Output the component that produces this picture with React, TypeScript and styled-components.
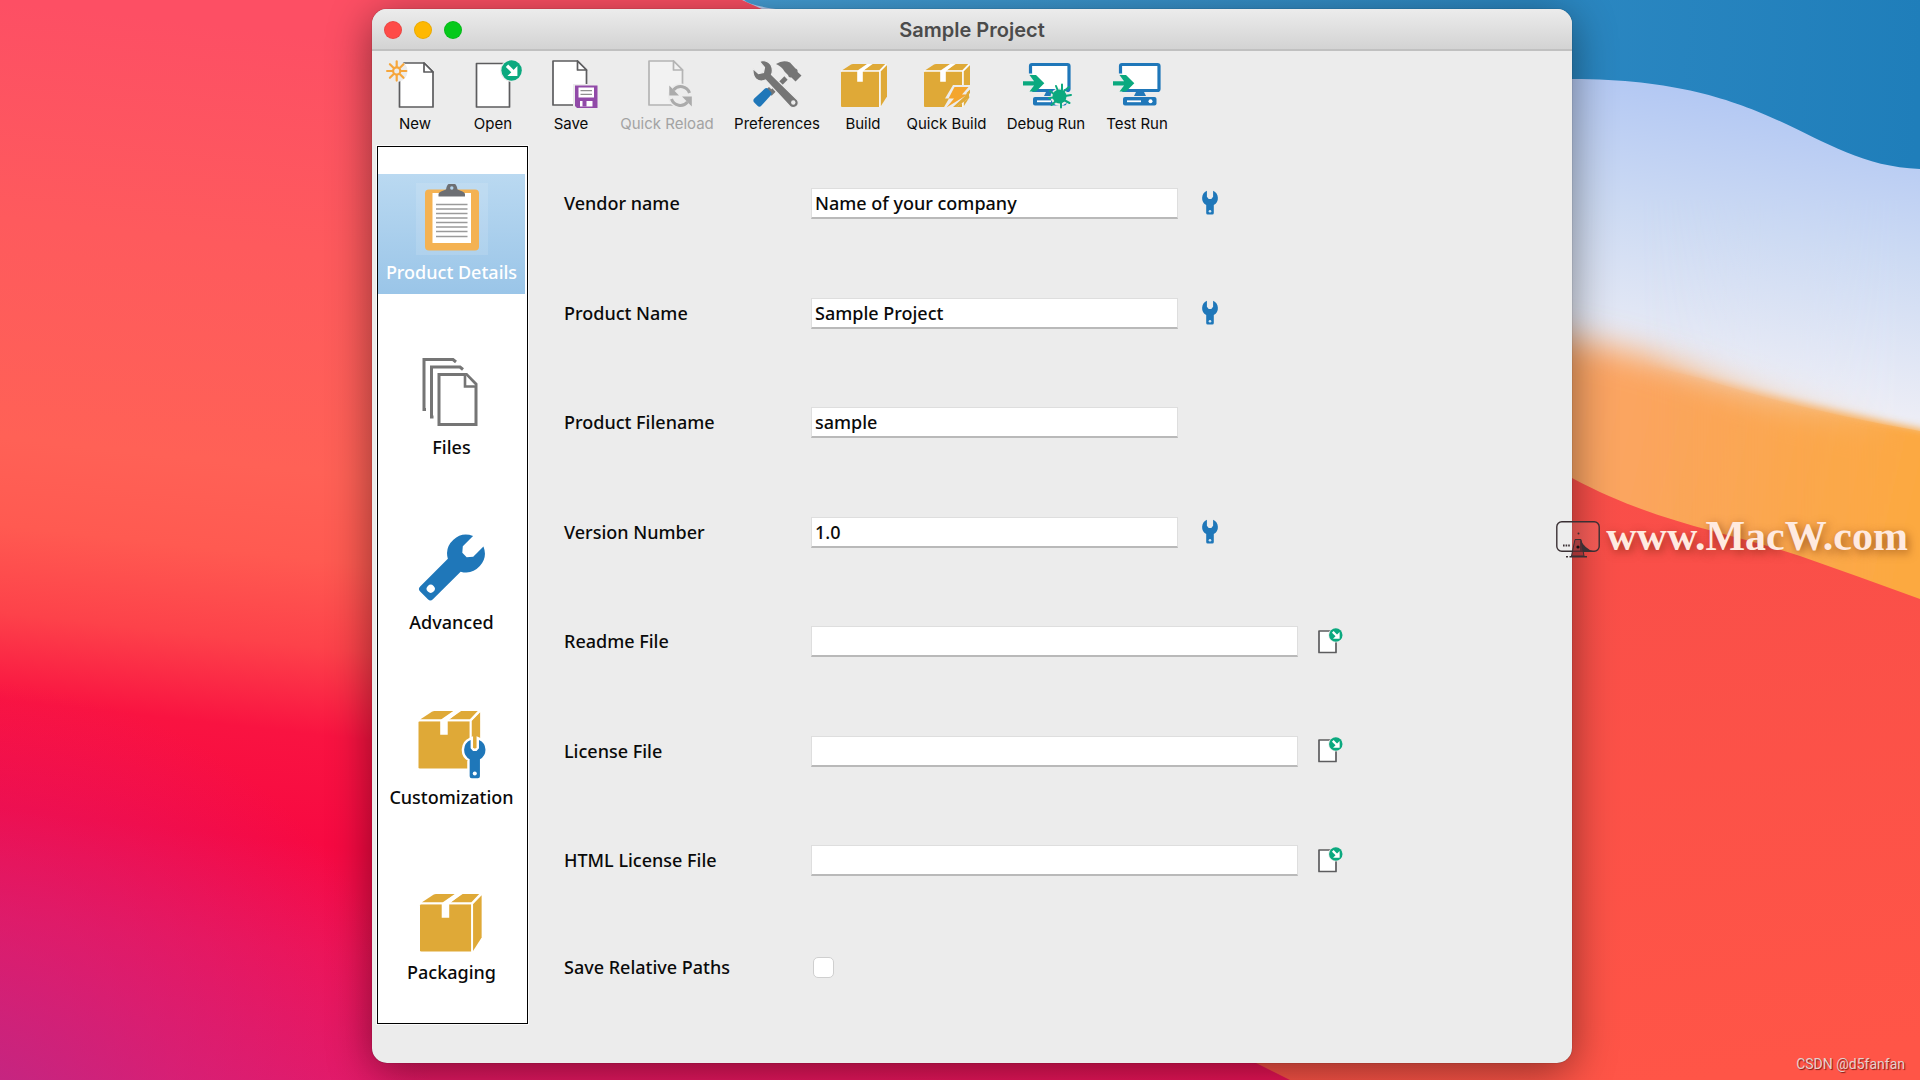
import React, { useState } from "react";
import styled, { createGlobalStyle } from "styled-components";

const BLUE = "#1f77b9";
const GREEN = "#0ba97f";
const GOLD = "#dfa937";
const GREY = "#757575";
const LINE = "#5c5c5e";
const FACE = "#ececec";

const GlobalStyle = createGlobalStyle`
  *, *::before, *::after { box-sizing: border-box; }
  body { margin: 0; }
  button, input { font: inherit; color: inherit; }
`;

/* ---------- layout ---------- */

const Desktop = styled.div`
  position: relative;
  isolation: isolate;
  overflow: hidden;
  display: flex;
  min-height: 100vh;
  padding: 9px 348px 17px 372px;
  font-family: "Noto Sans", "Open Sans", sans-serif;
  font-size: 18px;
  font-weight: 500;
  color: #0a0a0a;
`;

const Wallpaper = styled.svg`
  position: absolute;
  inset: 0;
  z-index: -1;
  width: 100%;
  height: 100%;
`;

const Window = styled.main`
  flex: 1;
  display: flex;
  flex-direction: column;
  border-radius: 15px;
  background: ${FACE};
  box-shadow: 0 0 1px rgba(0, 0, 0, 0.6), 0 8px 44px rgba(0, 0, 0, 0.45);
`;

const TitleBar = styled.header`
  display: grid;
  grid-template-columns: 1fr auto 1fr;
  align-items: center;
  height: 42px;
  padding: 2px 12px 0;
  border-bottom: 2px solid #c0c0c0;
  border-radius: 15px 15px 0 0;
  background: linear-gradient(#ececec, #d3d3d3);
`;

const Lights = styled.div`
  display: flex;
  gap: 12px;
`;

const Light = styled.button<{ $color: string }>`
  width: 18px;
  height: 18px;
  padding: 0;
  border: 1px solid rgba(0, 0, 0, 0.08);
  border-radius: 50%;
  background: ${(p) => p.$color};
`;

const Title = styled.h1`
  margin: 0;
  font-family: Inter, "Liberation Sans", sans-serif;
  font-size: 20px;
  font-weight: 600;
  line-height: 24px;
  color: #4b4b4b;
`;

const Toolbar = styled.div`
  display: flex;
  padding: 9px 4px 0;
`;

const ToolButton = styled.button<{ $width: number }>`
  display: flex;
  flex-direction: column;
  align-items: center;
  gap: 6px;
  width: ${(p) => p.$width}px;
  padding: 0;
  border: 0;
  background: none;
  font-family: Inter, "Liberation Sans", sans-serif;
  font-size: 15px;
  font-weight: 400;
  line-height: 20px;
  white-space: nowrap;
  &:disabled { color: #a3a3a3; }
`;

const ToolIcon = styled.svg`
  width: 60px;
  height: 48px;
  overflow: visible;
`;

const Body = styled.div`
  flex: 1;
  display: flex;
  padding: 12px 5px 39px;
`;

const Sidebar = styled.nav`
  display: flex;
  flex-direction: column;
  justify-content: space-between;
  width: 151px;
  padding: 27px 2px 29px 0;
  border: 1px solid #000;
  background: #fff;
  box-shadow: 0 0 0 1px #fafafa;
`;

const SideItem = styled.button<{ $active: boolean }>`
  display: flex;
  flex-direction: column;
  align-items: center;
  gap: 5px;
  height: 120px;
  padding: 9px 0;
  border: 0;
  background: ${(p) => (p.$active ? "linear-gradient(#bad9f1, #9ac5e8)" : "none")};
  color: ${(p) => (p.$active ? "#fff" : "inherit")};
  line-height: 24px;
  white-space: nowrap;
`;

const SideIcon = styled.svg`
  width: 72px;
  height: 72px;
`;

const Form = styled.form`
  flex: 1;
  display: flex;
  flex-direction: column;
  justify-content: space-between;
  padding: 42px 36px 44px;
`;

const Row = styled.div`
  display: grid;
  grid-template-columns: 247px 1fr;
  align-items: center;
  line-height: 25px;
`;

const Field = styled.div`
  display: flex;
  align-items: center;
  gap: 20px;
`;

const TextInput = styled.input<{ $long?: boolean }>`
  width: ${(p) => (p.$long ? 487 : 367)}px;
  height: 31px;
  padding: 0 3px;
  border: 1px solid #dedede;
  border-bottom: 2px solid #b9b9b9;
  background: #fff;
  outline: none;
`;

const IconButton = styled.button`
  display: flex;
  padding: 0;
  border: 0;
  background: none;
`;

const Check = styled.input`
  appearance: none;
  width: 21px;
  height: 21px;
  margin: 0 2px;
  border: 1px solid #cfcfcf;
  border-radius: 5px;
  background: #fff;
  &:checked { background: ${BLUE}; }
`;

const SiteMark = styled.div`
  position: absolute;
  right: 12px;
  top: 512px;
  display: flex;
  align-items: center;
  gap: 6px;
  font-family: "Liberation Serif", serif;
  font-size: 42px;
  font-weight: 700;
  line-height: 48px;
  color: #ffeae0;
  text-shadow: 2px 3px 10px rgba(90, 30, 0, 0.55);
`;

const Credit = styled.div`
  position: absolute;
  right: 15px;
  bottom: 6px;
  font-family: Roboto, "Liberation Sans", sans-serif;
  font-size: 14px;
  font-weight: 400;
  line-height: 20px;
  color: #e6d0cd;
  text-shadow: 1px 1px 1px rgba(70, 0, 0, 0.7);
`;

/* ---------- drawings ---------- */

const wrenchPath = (len: number) =>
  `M4.9 .7A8 8 0 0 0 4.2 15V${len - 1.5}Q4.2 ${len} 5.7 ${len}H10.3Q11.8 ${len} 11.8 ${len - 1.5}V15A8 8 0 0 0 11.1 .7V6.8L9.3 8.9H6.7L4.9 6.8Z`;

function Arrow({ x, y }: { x: number; y: number }) {
  return (
    <g transform={`translate(${x} ${y})`}>
      <circle r="11.4" fill={FACE} />
      <circle r="10.2" fill={GREEN} />
      <path d="M-4.6 -4.8L4 3.8" stroke="#fff" strokeWidth="3.4" />
      <path d="M5.8 -4.4V5.6H-4.2L-.8 2.2 2.4 -1Z" fill="#fff" />
    </g>
  );
}

function Sheet({ x, y, stroke = LINE, fill = "#fff" }: { x: number; y: number; stroke?: string; fill?: string }) {
  return (
    <g transform={`translate(${x} ${y})`} fill={fill} stroke={stroke} strokeWidth="1.7" strokeLinejoin="round">
      <path d="M0 0H24.5L33.5 9V44H0Z" />
      <path d="M24.5 0V9H33.5Z" />
    </g>
  );
}

/* Parcel drawn in a 46 x 43 box. */
function Parcel({ x, y, scale = 1 }: { x: number; y: number; scale?: number }) {
  return (
    <g transform={`translate(${x} ${y}) scale(${scale})`}>
      <path d="M1 7.6H38.2V43H1Q0 43 0 42V8.6Q0 7.6 1 7.6Z" fill={GOLD} />
      <path d="M1.2 6.3L10 .5Q10.8 0 12 0H26L16.8 6.3Z" fill={GOLD} />
      <path d="M22.6 6.3L31.8 0H44.2L38.2 6.3Z" fill={GOLD} />
      <path d="M39.6 7.4L46 1V32.5L39.6 42.5Z" fill={GOLD} />
      <path d="M16.2 7.2L26.4 0H31L21.8 7.2V17.8H16.2Z" fill="#fff" />
      <path d="M0 7H39L45.4 .4M38.9 7V43" fill="none" stroke="#fff" strokeWidth="1.2" />
    </g>
  );
}

function Monitor({ x }: { x: number }) {
  return (
    <g transform={`translate(${x} 0)`}>
      <rect x="1.5" y="4.5" width="38.5" height="26" rx="1.5" fill="#fff" stroke={BLUE} strokeWidth="3.2" />
      <path d="M17 32H25L27 36H15Z" fill={BLUE} />
      <rect x="4" y="37" width="33.5" height="8.5" rx="2" fill={BLUE} />
      <path d="M8 41.3H22" stroke="#fff" strokeWidth="1.8" />
      <circle cx="31.5" cy="41.3" r="2" fill="#fff" />
      <path d="M-1 13.500H3.300V33H-1Z" fill={FACE} />
      <path d="M-6 21.200H5L.5 15H7L15.300 23.300 7 31.600H.5L5 25.500H-6Z" fill={GREEN} />
    </g>
  );
}

const toolIcons = {
  new: (
    <>
      <Sheet x={14.5} y={3} />
      <circle cx="11.7" cy="11" r="10.8" fill={FACE} />
      <g stroke="#f6a63c" strokeWidth="2.2" strokeLinecap="round" fill="none">
        <circle cx="11.7" cy="11" r="3.6" />
        {[0, 45, 90, 135, 180, 225, 270, 315].map((a) => (
          <path key={a} d="M11.7 6.4V1.4" transform={`rotate(${a} 11.7 11)`} />
        ))}
      </g>
    </>
  ),
  open: (
    <>
      <path d="M13.5 3.5H46.5V47H13.5Z" fill="#fff" stroke={LINE} strokeWidth="1.7" strokeLinejoin="round" />
      <Arrow x={48.6} y={10.5} />
    </>
  ),
  save: (
    <>
      <Sheet x={12} y={1} />
      <path d="M32 24H58V49H32Z" fill={FACE} />
      <path d="M34 25.5H56.5V48H36L34 46Z" fill="#914aa8" />
      <path d="M37.5 27.5H53V37.5H37.5Z" fill="#fff" />
      <path d="M39.5 30.7H51M39.5 34.3H51" stroke="#8f8f8f" strokeWidth="1.3" />
      <path d="M39 41H51.5V46.5H39Z" fill="#fff" />
      <path d="M41.5 41H45.5V46.5H41.5Z" fill="#914aa8" />
    </>
  ),
  reload: (
    <>
      <Sheet x={12} y={1} stroke="#b4b4b4" fill="#f2f2f2" />
      <circle cx="43.5" cy="36" r="12.5" fill={FACE} />
      <g fill="none" stroke="#ababab" strokeWidth="3">
        <path d="M52.5 33A9.3 9.3 0 0 0 36.5 30" />
        <path d="M34.5 39A9.3 9.3 0 0 0 50.5 42" />
      </g>
      <path d="M32.3 25.5V35.5H42Z M54.8 46.5V36.5H45Z" fill="#ababab" />
    </>
  ),
  prefs: (
    <>
      <path d="M39 18L23 34" stroke={GREY} strokeWidth="4.6" />
      <path d="M18.500 30L22 27 26 31 23 34Z" fill={GREY} />
      <path d="M18 28.500Q19.500 27.500 21 29L24 32Q25 33.500 24 35L14.500 45.500Q12.500 47.800 10.500 45.800L7 42.300Q5.500 40 7.500 38.300Z" fill={BLUE} />
      <path d="M29 4Q36 -.5 43 2.6L48.500 8.500Q51 9 50.600 12L54.500 15.500 48.500 21.500 44.500 17.500Q41.500 18 41 15L37.500 11.500Q35 6.500 29 4Z" fill={GREY} />
      <path d="M16 .5Q21 1 24 5Q26.500 10 24.500 14.500L50.500 40Q52.500 44 49.500 46.500Q46 48.500 43 46.500L18.500 20Q13 22.500 9 19Q5.500 15.500 6 8.500L11.500 13.500 16.500 12.500 17.500 7.500 12.500 1.500Z" fill={GREY} stroke={FACE} strokeWidth="1.200" />
      <circle cx="46.300" cy="42.500" r="2.200" fill={FACE} />
    </>
  ),
  build: <Parcel x={8} y={4} />,
  quickBuild: (
    <>
      <Parcel x={7} y={4} />
      <path d="M36 25H55V27.500L49 33.500H54.500L52 38 38 48H26.500L32 38.500H28Z" fill={FACE} />
      <path d="M37.500 27H51.500L45 34.500H50.500L29.500 47.500 37 38.500H31.500Z" fill="#f4a52e" />
      <path d="M52 31V38L39.500 47H36L47.500 36.500Z" fill={GOLD} />
    </>
  ),
  debug: (
    <>
      <Monitor x={13} />
      <circle cx="43.500" cy="37" r="9" fill={FACE} />
      <g stroke={GREEN} strokeWidth="2" fill="none" strokeLinecap="round">
        <path d="M34 31L38 34M33 38L38 37.500M35.500 45L40 41M53 27L47 32M55 35L49 36M53.500 43L48 40M45 43V47.500M40 26L42 31M46 24.500V30" />
      </g>
      <circle cx="43.500" cy="36.500" r="7" fill={GREEN} />
    </>
  ),
  test: <Monitor x={12} />,
};

const tools: { id: keyof typeof toolIcons; label: string; width: number; disabled?: boolean }[] = [
  { id: "new", label: "New", width: 78 },
  { id: "open", label: "Open", width: 78 },
  { id: "save", label: "Save", width: 78 },
  { id: "reload", label: "Quick Reload", width: 114, disabled: true },
  { id: "prefs", label: "Preferences", width: 106 },
  { id: "build", label: "Build", width: 66 },
  { id: "quickBuild", label: "Quick Build", width: 101 },
  { id: "debug", label: "Debug Run", width: 98 },
  { id: "test", label: "Test Run", width: 84 },
];

const sections = [
  {
    label: "Product Details",
    icon: (
      <>
        <rect width="72" height="72" fill="#fff" opacity=".12" />
        <rect x="9" y="6.500" width="54" height="61" rx="4" fill="#f4b252" />
        <rect x="16.500" y="10" width="38.500" height="50" fill="#fff" />
        <path d="M20 21.500H51.500M20 26H51.500M20 30.500H51.500M20 35H51.500M20 39.500H51.500M20 44H51.500M20 48.500H51.500M20 53.500H51.500" stroke="#9a9a9a" strokeWidth="1.300" />
        <path d="M22.500 13.500V11Q22.500 9.500 25 8.500L30 6.500Q31 1 33 1H38.500Q40.500 1 41.500 6.500L46.500 8.500Q49 9.500 49 11V13.500Z" fill="#6d6f73" />
        <circle cx="35.800" cy="5" r="1.700" fill="#b5d5ee" />
      </>
    ),
  },
  {
    label: "Files",
    icon: (
      <g transform="translate(-1 0)" fill="#fff" stroke={GREY} strokeWidth="3">
        <path d="M11 51.500H9V1.500H38L41 4" fill="none" />
        <path d="M18.500 59H16.500V9H45L48 11.500" fill="none" />
        <path d="M24 16.500H51.500L61 26V66.500H24Z" />
        <path d="M50 16.500V28.500H61" strokeWidth="2.600" />
      </g>
    ),
  },
  {
    label: "Advanced",
    icon: (
      <g transform="rotate(45 50 20.500) translate(31 1.500) scale(2.375)">
        <path d={wrenchPath(33)} fill={BLUE} />
        <circle cx="8" cy="29" r="1.700" fill="#fff" />
      </g>
    ),
  },
  {
    label: "Customization",
    icon: (
      <>
        <Parcel x={2.500} y={3} scale={1.340} />
        <g transform="translate(48 31) scale(1.350)">
          <path d={wrenchPath(29)} fill={BLUE} stroke="#fff" strokeWidth="3.600" />
          <path d={wrenchPath(29)} fill={BLUE} />
          <circle cx="8" cy="25.500" r="1.500" fill="#fff" />
        </g>
      </>
    ),
  },
  { label: "Packaging", icon: <Parcel x={4} y={11} scale={1.340} /> },
];

function WrenchIcon() {
  return (
    <svg width="24" height="27" viewBox="0 0 24 27">
      <g transform="translate(4 0)">
        <path d={wrenchPath(24.500)} fill={BLUE} />
        <circle cx="8" cy="21.300" r="1.300" fill="#cfe3f2" />
      </g>
    </svg>
  );
}

function OpenFileIcon() {
  return (
    <svg width="25" height="28" viewBox="0 0 25 28">
      <path d="M1 3H18V24.500H1Z" fill="#fff" stroke={LINE} strokeWidth="1.700" strokeLinejoin="round" />
      <g transform="translate(17.800 7) scale(.66)">
        <Arrow x={0} y={0} />
      </g>
    </svg>
  );
}

function MacIcon() {
  return (
    <svg width="44" height="46" viewBox="0 -8 44 46">
      <rect x=".8" y=".8" width="42.400" height="29.500" rx="5" fill="rgba(255,255,255,.08)" stroke="#3a3034" strokeWidth="1.400" />
      <path d="M24 18Q29 28 37 30H24Z" fill="#3a3034" />
      <path d="M16.500 30L19 18.500H25L28 35H15.500Z" fill="rgba(120,40,45,.5)" stroke="#3a3034" strokeWidth="1" />
      <circle cx="22" cy="26" r="1.600" fill="#151013" />
      <circle cx="22.500" cy="12.500" r="1" fill="#3a3034" />
      <path d="M7 24.500H14" stroke="#3a3034" strokeWidth="2.200" strokeDasharray="1.600 1" />
      <path d="M10 35.800H31" stroke="#3a3034" strokeWidth="1.500" strokeDasharray="2 1.500 18" />
    </svg>
  );
}

function Background() {
  return (
    <Wallpaper viewBox="0 0 1920 1080" preserveAspectRatio="xMidYMid slice" aria-hidden="true">
      <defs>
        <linearGradient id="base" gradientUnits="userSpaceOnUse" x1="0" y1="0" x2="-119" y2="1080">
          <stop offset="0" stopColor="#fd4f64" />
          <stop offset=".2" stopColor="#fe5a5d" />
          <stop offset=".4" stopColor="#ff6156" />
          <stop offset=".48" stopColor="#ff5a51" />
          <stop offset=".56" stopColor="#fd424a" />
          <stop offset=".64" stopColor="#f91341" />
          <stop offset=".74" stopColor="#f70942" />
          <stop offset=".84" stopColor="#ef1355" />
          <stop offset="1" stopColor="#e21b6c" />
        </linearGradient>
        <radialGradient id="violet" gradientUnits="userSpaceOnUse" cx="-40" cy="1160" r="480">
          <stop offset="0" stopColor="#b52a8a" stopOpacity=".95" />
          <stop offset=".5" stopColor="#cb2480" stopOpacity=".5" />
          <stop offset="1" stopColor="#d5207a" stopOpacity="0" />
        </radialGradient>
        <linearGradient id="sea" gradientUnits="userSpaceOnUse" x1="740" y1="0" x2="1920" y2="60">
          <stop offset="0" stopColor="#459fd6" />
          <stop offset=".5" stopColor="#338dc6" />
          <stop offset="1" stopColor="#1f7eba" />
        </linearGradient>
        <linearGradient id="sky" gradientUnits="userSpaceOnUse" x1="1700" y1="90" x2="1650" y2="370">
          <stop offset="0" stopColor="#b3c8f3" />
          <stop offset=".45" stopColor="#ccdaf3" />
          <stop offset="1" stopColor="#ecedf6" />
        </linearGradient>
        <linearGradient id="sand" gradientUnits="userSpaceOnUse" x1="1572" y1="400" x2="1920" y2="480">
          <stop offset="0" stopColor="#fba466" />
          <stop offset="1" stopColor="#fca941" />
        </linearGradient>
        <linearGradient id="coral" gradientUnits="userSpaceOnUse" x1="1600" y1="480" x2="1700" y2="1080">
          <stop offset="0" stopColor="#f94e49" />
          <stop offset="1" stopColor="#ff5547" />
        </linearGradient>
        <filter id="soft" x="-20%" y="-50%" width="140%" height="200%">
          <feGaussianBlur stdDeviation="16" />
        </filter>
        <filter id="crisp" x="-20%" y="-50%" width="140%" height="200%">
          <feGaussianBlur stdDeviation="4" />
        </filter>
        <linearGradient id="fade" gradientUnits="userSpaceOnUse" x1="1640" y1="0" x2="1900" y2="0">
          <stop offset="0" stopColor="#fff" stopOpacity="0" />
          <stop offset="1" stopColor="#fff" />
        </linearGradient>
        <mask id="fadeMask">
          <rect width="1920" height="1080" fill="url(#fade)" />
        </mask>
      </defs>
      <rect width="1920" height="1080" fill="url(#base)" />
      <rect width="1920" height="1080" fill="url(#violet)" />
      <path d="M742 0L764 10 1000 500H1920V0Z" fill="#c0d4f5" />
      <path d="M1200 60H1920V500H1200Z" fill="url(#sky)" />
      <path d="M1200 290Q1560 320 1700 374T2000 440V700H1200Z" fill="url(#sand)" filter="url(#soft)" />
      <g mask="url(#fadeMask)">
        <path d="M1500 200H1920V431Q1800 410 1700 378L1500 330Z" fill="url(#sky)" />
        <path d="M1400 300Q1600 350 1720 382T2000 446V700H1400Z" fill="url(#sand)" filter="url(#crisp)" />
      </g>
      <path d="M744 0Q750 6 784 10Q1150 70 1572 79C1780 79 1810 165 1920 169V0Z" fill="url(#sea)" />
      <path d="M1290 1080L1250 1060 1200 340Q1572 478 1572 478C1660 525 1730 532 1800 556Q1860 577 1920 599V1080Z" fill="url(#coral)" />
    </Wallpaper>
  );
}

/* ---------- page ---------- */

type FieldSpec = { id: string; label: string; value: string; action?: "vars" | "browse" };

const fields: FieldSpec[] = [
  { id: "vendor", label: "Vendor name", value: "Name of your company", action: "vars" },
  { id: "product", label: "Product Name", value: "Sample Project", action: "vars" },
  { id: "filename", label: "Product Filename", value: "sample" },
  { id: "version", label: "Version Number", value: "1.0", action: "vars" },
  { id: "readme", label: "Readme File", value: "", action: "browse" },
  { id: "license", label: "License File", value: "", action: "browse" },
  { id: "html-license", label: "HTML License File", value: "", action: "browse" },
];

export default function App() {
  const [section, setSection] = useState("Product Details");

  return (
    <>
      <GlobalStyle />
      <Desktop>
        <Background />
        <Window>
          <TitleBar>
            <Lights>
              <Light type="button" aria-label="Close" $color="#fe4b48" />
              <Light type="button" aria-label="Minimize" $color="#feb801" />
              <Light type="button" aria-label="Zoom" $color="#06c91b" />
            </Lights>
            <Title>Sample Project</Title>
          </TitleBar>
          <Toolbar role="toolbar">
            {tools.map((t) => (
              <ToolButton key={t.id} type="button" $width={t.width} disabled={t.disabled}>
                <ToolIcon viewBox="0 0 60 48" aria-hidden="true">{toolIcons[t.id]}</ToolIcon>
                {t.label}
              </ToolButton>
            ))}
          </Toolbar>
          <Body>
            <Sidebar>
              {sections.map((s) => (
                <SideItem key={s.label} type="button" $active={s.label === section} onClick={() => setSection(s.label)}>
                  <SideIcon viewBox="0 0 72 72" aria-hidden="true">{s.icon}</SideIcon>
                  {s.label}
                </SideItem>
              ))}
            </Sidebar>
            <Form>
              {fields.map((f) => (
                <Row key={f.id}>
                  <label htmlFor={f.id}>{f.label}</label>
                  <Field>
                    <TextInput id={f.id} type="text" defaultValue={f.value} $long={f.action === "browse"} />
                    {f.action && (
                      <IconButton type="button" aria-label={f.action === "vars" ? "Insert variable" : "Choose file"}>
                        {f.action === "vars" ? <WrenchIcon /> : <OpenFileIcon />}
                      </IconButton>
                    )}
                  </Field>
                </Row>
              ))}
              <Row>
                <label htmlFor="relative">Save Relative Paths</label>
                <Field>
                  <Check id="relative" type="checkbox" />
                </Field>
              </Row>
            </Form>
          </Body>
        </Window>
        <SiteMark>
          <MacIcon />
          www.MacW.com
        </SiteMark>
        <Credit>CSDN @d5fanfan</Credit>
      </Desktop>
    </>
  );
}
